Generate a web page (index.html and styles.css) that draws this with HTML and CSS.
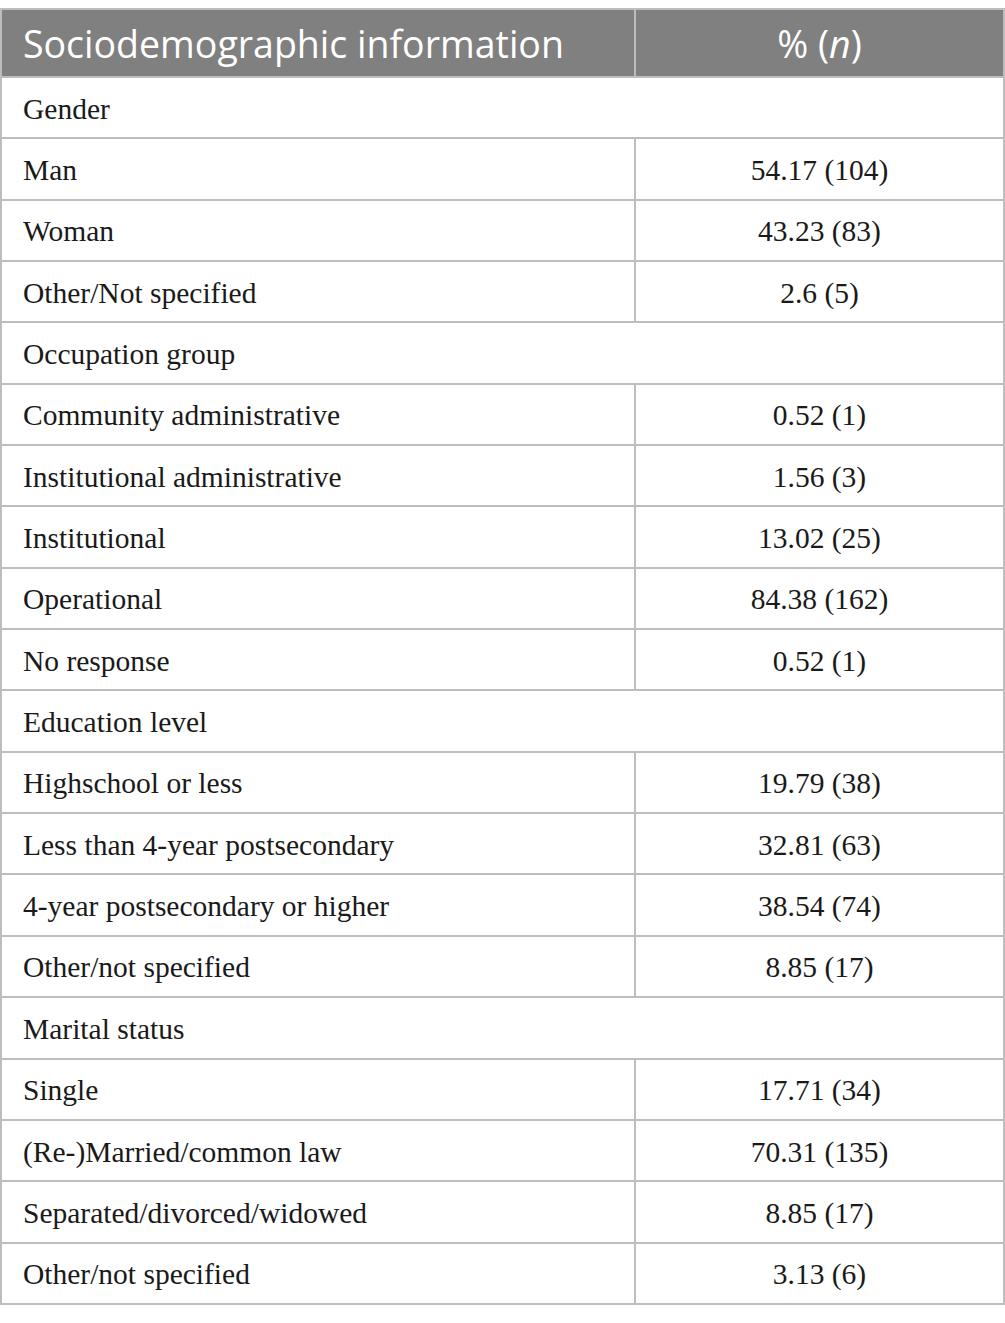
FILE: index.html
```html
<!DOCTYPE html>
<html lang="en">
<head>
<meta charset="utf-8">
<title>Sociodemographic information</title>
<link rel="stylesheet" href="styles.css">
</head>
<body>
<table class="data">
  <thead>
    <tr><th class="c1">Sociodemographic information</th><th class="c2">% (<i>n</i>)</th></tr>
  </thead>
  <tbody>
    <tr><td colspan="2">Gender</td></tr>
    <tr><td>Man</td><td class="num">54.17 (104)</td></tr>
    <tr><td>Woman</td><td class="num">43.23 (83)</td></tr>
    <tr><td>Other/Not specified</td><td class="num">2.6 (5)</td></tr>
    <tr><td colspan="2">Occupation group</td></tr>
    <tr><td>Community administrative</td><td class="num">0.52 (1)</td></tr>
    <tr><td>Institutional administrative</td><td class="num">1.56 (3)</td></tr>
    <tr><td>Institutional</td><td class="num">13.02 (25)</td></tr>
    <tr><td>Operational</td><td class="num">84.38 (162)</td></tr>
    <tr><td>No response</td><td class="num">0.52 (1)</td></tr>
    <tr><td colspan="2">Education level</td></tr>
    <tr><td>Highschool or less</td><td class="num">19.79 (38)</td></tr>
    <tr><td>Less than 4-year postsecondary</td><td class="num">32.81 (63)</td></tr>
    <tr><td>4-year postsecondary or higher</td><td class="num">38.54 (74)</td></tr>
    <tr><td>Other/not specified</td><td class="num">8.85 (17)</td></tr>
    <tr><td colspan="2">Marital status</td></tr>
    <tr><td>Single</td><td class="num">17.71 (34)</td></tr>
    <tr><td>(Re-)Married/common law</td><td class="num">70.31 (135)</td></tr>
    <tr><td>Separated/divorced/widowed</td><td class="num">8.85 (17)</td></tr>
    <tr><td>Other/not specified</td><td class="num">3.13 (6)</td></tr>
  </tbody>
</table>
</body>
</html>
```
FILE: styles.css
```css
html, body {
  margin: 0;
  padding: 0;
  background: #ffffff;
}
body {
  padding-top: 8px;
}
.data {
  width: 1005px;
  border-collapse: collapse;
  table-layout: fixed;
  font-family: "Liberation Serif", "Times New Roman", serif;
  color: #1a1a1a;
}
.data th, .data td {
  border: 2px solid #bdbdbd;
  padding: 0 0 0 21px;
}
.data th {
  height: 66px;
  background: #7f807f;
  color: #ffffff;
  font-family: "Open Sans", "Noto Sans", sans-serif;
  font-weight: 400;
  font-size: 37.5px;
  text-align: left;
}
.data th.c1 {
  width: 611px;
}
.data th.c2 {
  text-align: center;
  padding: 0;
}
.data td {
  height: 56.35px;
  padding-top: 3px;
  font-size: 29.5px;
}
.data td.num {
  text-align: center;
  padding-left: 0;
}
```
